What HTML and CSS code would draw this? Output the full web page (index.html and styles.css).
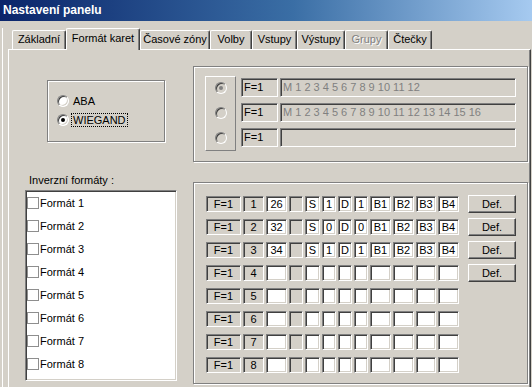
FILE: index.html
```html
<!DOCTYPE html>
<html lang="cs">
<head>
    <meta charset="UTF-8">
    <title>Nastavení panelu</title>
    <link rel="stylesheet" href="styles.css">
</head>
<body>
<div class="window">
    <div class="titlebar">Nastavení panelu</div>
    <div class="client">
        <ul class="tabs">
            <li class="tab">Základní</li>
            <li class="tab active">Formát karet</li>
            <li class="tab">Časové zóny</li>
            <li class="tab">Volby</li>
            <li class="tab">Vstupy</li>
            <li class="tab">Výstupy</li>
            <li class="tab disabled">Grupy</li>
            <li class="tab">Čtečky</li>
        </ul>
        <div class="panel">
            <div class="col-left">
                <div class="group type-box">
                    <div class="opt"><span class="radio"></span><span class="opt-text">ABA</span></div>
                    <div class="opt"><span class="radio on"></span><span class="opt-text focus">WIEGAND</span></div>
                </div>
                <div class="list-label">Inverzní formáty :</div>
                <ul class="listbox">
                    <li><span class="check"></span>Formát 1</li>
                    <li><span class="check"></span>Formát 2</li>
                    <li><span class="check"></span>Formát 3</li>
                    <li><span class="check"></span>Formát 4</li>
                    <li><span class="check"></span>Formát 5</li>
                    <li><span class="check"></span>Formát 6</li>
                    <li><span class="check"></span>Formát 7</li>
                    <li><span class="check"></span>Formát 8</li>
                </ul>
            </div>
            <div class="col-right">
                <div class="group fmt-box">
                    <div class="radio-frame">
                        <div class="radio-row"><span class="radio dis on"></span></div>
                        <div class="radio-row"><span class="radio dis"></span></div>
                        <div class="radio-row"><span class="radio dis"></span></div>
                    </div>
                    <div class="fmt-fields">
                        <div class="fmt-row"><span class="field short">F=1</span><span class="field long">M 1 2 3 4 5 6 7 8 9 10 11 12</span></div>
                        <div class="fmt-row"><span class="field short">F=1</span><span class="field long">M 1 2 3 4 5 6 7 8 9 10 11 12 13 14 15 16</span></div>
                        <div class="fmt-row"><span class="field short">F=1</span><span class="field long"></span></div>
                    </div>
                </div>
                <div class="group grid-box">
                    <div class="grid">
                        <!-- radek 1 -->
                        <span class="cell off">F=1</span><span class="cell off">1</span><span class="cell">26</span><span class="cell off"></span>
                        <span class="cell">S</span><span class="cell">1</span><span class="cell">D</span><span class="cell">1</span>
                        <span class="cell">B1</span><span class="cell">B2</span><span class="cell">B3</span><span class="cell">B4</span>
                        <button class="btn">Def.</button>
                        <!-- radek 2 -->
                        <span class="cell off">F=1</span><span class="cell off">2</span><span class="cell">32</span><span class="cell off"></span>
                        <span class="cell">S</span><span class="cell">0</span><span class="cell">D</span><span class="cell">0</span>
                        <span class="cell">B1</span><span class="cell">B2</span><span class="cell">B3</span><span class="cell">B4</span>
                        <button class="btn">Def.</button>
                        <!-- radek 3 -->
                        <span class="cell off">F=1</span><span class="cell off">3</span><span class="cell">34</span><span class="cell off"></span>
                        <span class="cell">S</span><span class="cell">1</span><span class="cell">D</span><span class="cell">1</span>
                        <span class="cell">B1</span><span class="cell">B2</span><span class="cell">B3</span><span class="cell">B4</span>
                        <button class="btn">Def.</button>
                        <!-- radek 4 -->
                        <span class="cell off">F=1</span><span class="cell off">4</span><span class="cell"></span><span class="cell off"></span>
                        <span class="cell"></span><span class="cell"></span><span class="cell"></span><span class="cell"></span>
                        <span class="cell"></span><span class="cell"></span><span class="cell"></span><span class="cell"></span>
                        <button class="btn">Def.</button>
                        <!-- radek 5 -->
                        <span class="cell off">F=1</span><span class="cell off">5</span><span class="cell"></span><span class="cell off"></span>
                        <span class="cell"></span><span class="cell"></span><span class="cell"></span><span class="cell"></span>
                        <span class="cell"></span><span class="cell"></span><span class="cell"></span><span class="cell"></span>
                        <span></span>
                        <!-- radek 6 -->
                        <span class="cell off">F=1</span><span class="cell off">6</span><span class="cell"></span><span class="cell off"></span>
                        <span class="cell"></span><span class="cell"></span><span class="cell"></span><span class="cell"></span>
                        <span class="cell"></span><span class="cell"></span><span class="cell"></span><span class="cell"></span>
                        <span></span>
                        <!-- radek 7 -->
                        <span class="cell off">F=1</span><span class="cell off">7</span><span class="cell"></span><span class="cell off"></span>
                        <span class="cell"></span><span class="cell"></span><span class="cell"></span><span class="cell"></span>
                        <span class="cell"></span><span class="cell"></span><span class="cell"></span><span class="cell"></span>
                        <span></span>
                        <!-- radek 8 -->
                        <span class="cell off">F=1</span><span class="cell off">8</span><span class="cell"></span><span class="cell off"></span>
                        <span class="cell"></span><span class="cell"></span><span class="cell"></span><span class="cell"></span>
                        <span class="cell"></span><span class="cell"></span><span class="cell"></span><span class="cell"></span>
                        <span></span>
                    </div>
                </div>
            </div>
        </div>
    </div>
</div>
</body>
</html>
```

FILE: styles.css
```css
/* Okno ve stylu Windows Classic */
body {
    margin: 0;
    background-color: #d4d0c8;
    font-family: "Liberation Sans", Arial, sans-serif;
    font-size: 11px;
    color: #000;
    overflow: hidden;
}

.window {
    width: 532px;
    height: 387px;
    overflow: hidden;
}

.titlebar {
    height: 21px;
    line-height: 21px;
    padding-left: 3px;
    background: linear-gradient(to right, #0a246a, #3a6ea5 55%, #a6caf0);
    color: #fff;
    font-weight: bold;
    font-size: 12px;
}

.client {
    margin-left: 2px;
    border-left: 1px solid #fff;
    padding-left: 5px;
    height: 366px;
}

/* zalozky */
.tabs {
    list-style: none;
    margin: 7px 0 0 4px;
    padding: 0;
    height: 21px;
    display: grid;
    grid-template-columns: 54px 74px 70px 42px 45px 48px 43px 44px;
    align-items: end;
}

.tab {
    height: 19px;
    box-sizing: border-box;
    border-top: 1px solid #fff;
    border-left: 1px solid #fff;
    border-right: 1px solid #404040;
    border-radius: 2px 2px 0 0;
    box-shadow: inset -1px 0 0 #808080;
    text-align: center;
    line-height: 17px;
    white-space: nowrap;
}

.tab.active {
    height: 22px;
    margin-bottom: -1px;
    line-height: 18px;
    background-color: #d4d0c8;
    position: relative;
    z-index: 1;
}

.tab.disabled {
    color: #808080;
    text-shadow: 1px 1px 0 #fff;
}

.panel {
    width: 523px;
    height: 345px;
    box-sizing: border-box;
    border-top: 1px solid #fff;
    border-left: 1px solid #fff;
    border-right: 1px solid #404040;
    box-shadow: inset -1px 0 0 #808080;
    display: flex;
}

.col-left {
    width: 184px;
    flex: none;
}

.col-right {
    width: 335px;
    flex: none;
}

/* ramecek skupiny */
.group {
    box-sizing: border-box;
    border: 1px solid #808080;
    box-shadow: inset 1px 1px 0 #fff, 1px 1px 0 #fff;
}

.type-box {
    margin: 30px 0 0 38px;
    width: 118px;
    height: 62px;
    padding: 10px 0 0 9px;
}

.opt {
    height: 19px;
    display: flex;
    align-items: center;
}

.opt-text {
    margin-left: 3px;
    padding: 0 1px;
    line-height: 12px;
}

.focus {
    outline: 1px dotted #000;
}

.radio {
    width: 12px;
    height: 12px;
    box-sizing: border-box;
    border-radius: 50%;
    background-color: #fff;
    border: 1px solid;
    border-color: #808080 #fff #fff #808080;
    box-shadow: inset 1px 1px 0 #404040, inset -1px -1px 0 #d4d0c8;
    display: flex;
    align-items: center;
    justify-content: center;
    flex: none;
}

.radio.on::after {
    content: "";
    width: 4px;
    height: 4px;
    border-radius: 50%;
    background-color: #000;
}

.radio.dis {
    background-color: #d4d0c8;
}

.radio.dis.on::after {
    background-color: #808080;
}

.list-label {
    margin: 32px 0 0 20px;
    line-height: 13px;
}

.listbox {
    list-style: none;
    margin: 3px 0 0 16px;
    padding: 1px 0 0 1px;
    width: 152px;
    height: 191px;
    box-sizing: border-box;
    background-color: #fff;
    border: 1px solid;
    border-color: #808080 #fff #fff #808080;
    box-shadow: inset 1px 1px 0 #404040, inset -1px -1px 0 #d4d0c8;
}

.listbox li {
    height: 22.9px;
    display: flex;
    align-items: center;
}

.check {
    width: 12px;
    height: 12px;
    box-sizing: border-box;
    border: 1px solid #8e8e8e;
    background-color: #fff;
    margin-right: 1px;
}

/* horni skupina s formaty */
.fmt-box {
    margin-top: 16px;
    width: 335px;
    height: 96px;
    padding: 9px 0 0 11px;
    display: flex;
    align-items: flex-start;
}

.radio-frame {
    width: 31px;
    height: 75px;
    box-sizing: border-box;
    border: 1px solid;
    border-color: #fff #808080 #808080 #fff;
    padding-top: 1px;
    display: flex;
    flex-direction: column;
    align-items: center;
    gap: 6px;
}

.radio-row {
    height: 19px;
    display: flex;
    align-items: center;
}

.fmt-fields {
    margin: 2px 0 0 5px;
    display: flex;
    flex-direction: column;
    gap: 6px;
}

.fmt-row {
    display: flex;
    gap: 2px;
}

.field {
    height: 19px;
    box-sizing: border-box;
    border: 1px solid;
    border-color: #808080 #fff #fff #808080;
    box-shadow: inset 1px 1px 0 #404040, inset -1px -1px 0 #d4d0c8;
    background-color: #d4d0c8;
    padding-left: 2px;
    line-height: 17px;
    white-space: nowrap;
}

.field.short {
    width: 37px;
}

.field.long {
    width: 236px;
    color: #808080;
}

/* spodni tabulka */
.grid-box {
    margin-top: 20px;
    width: 335px;
    height: 202px;
    padding: 12px 0 0 12px;
}

.grid {
    display: grid;
    grid-template-columns: 35px 21px 21px 14px 15px 14px 14px 14px 21px 21px 20px 21px 48px;
    grid-auto-rows: 18px;
    column-gap: 2px;
    row-gap: 5px;
    align-items: center;
}

.cell {
    height: 16px;
    box-sizing: border-box;
    border: 1px solid;
    border-color: #808080 #fff #fff #808080;
    box-shadow: inset 1px 1px 0 #404040, inset -1px -1px 0 #d4d0c8;
    background-color: #fff;
    text-align: center;
    line-height: 14px;
}

.cell.off {
    background-color: #d4d0c8;
}

.btn {
    margin-left: 7px;
    width: 48px;
    height: 18px;
    padding: 0;
    font: inherit;
    color: #000;
    background-color: #d4d0c8;
    border: 1px solid;
    border-color: #fff #404040 #404040 #fff;
    box-shadow: inset -1px -1px 0 #808080;
}
```
